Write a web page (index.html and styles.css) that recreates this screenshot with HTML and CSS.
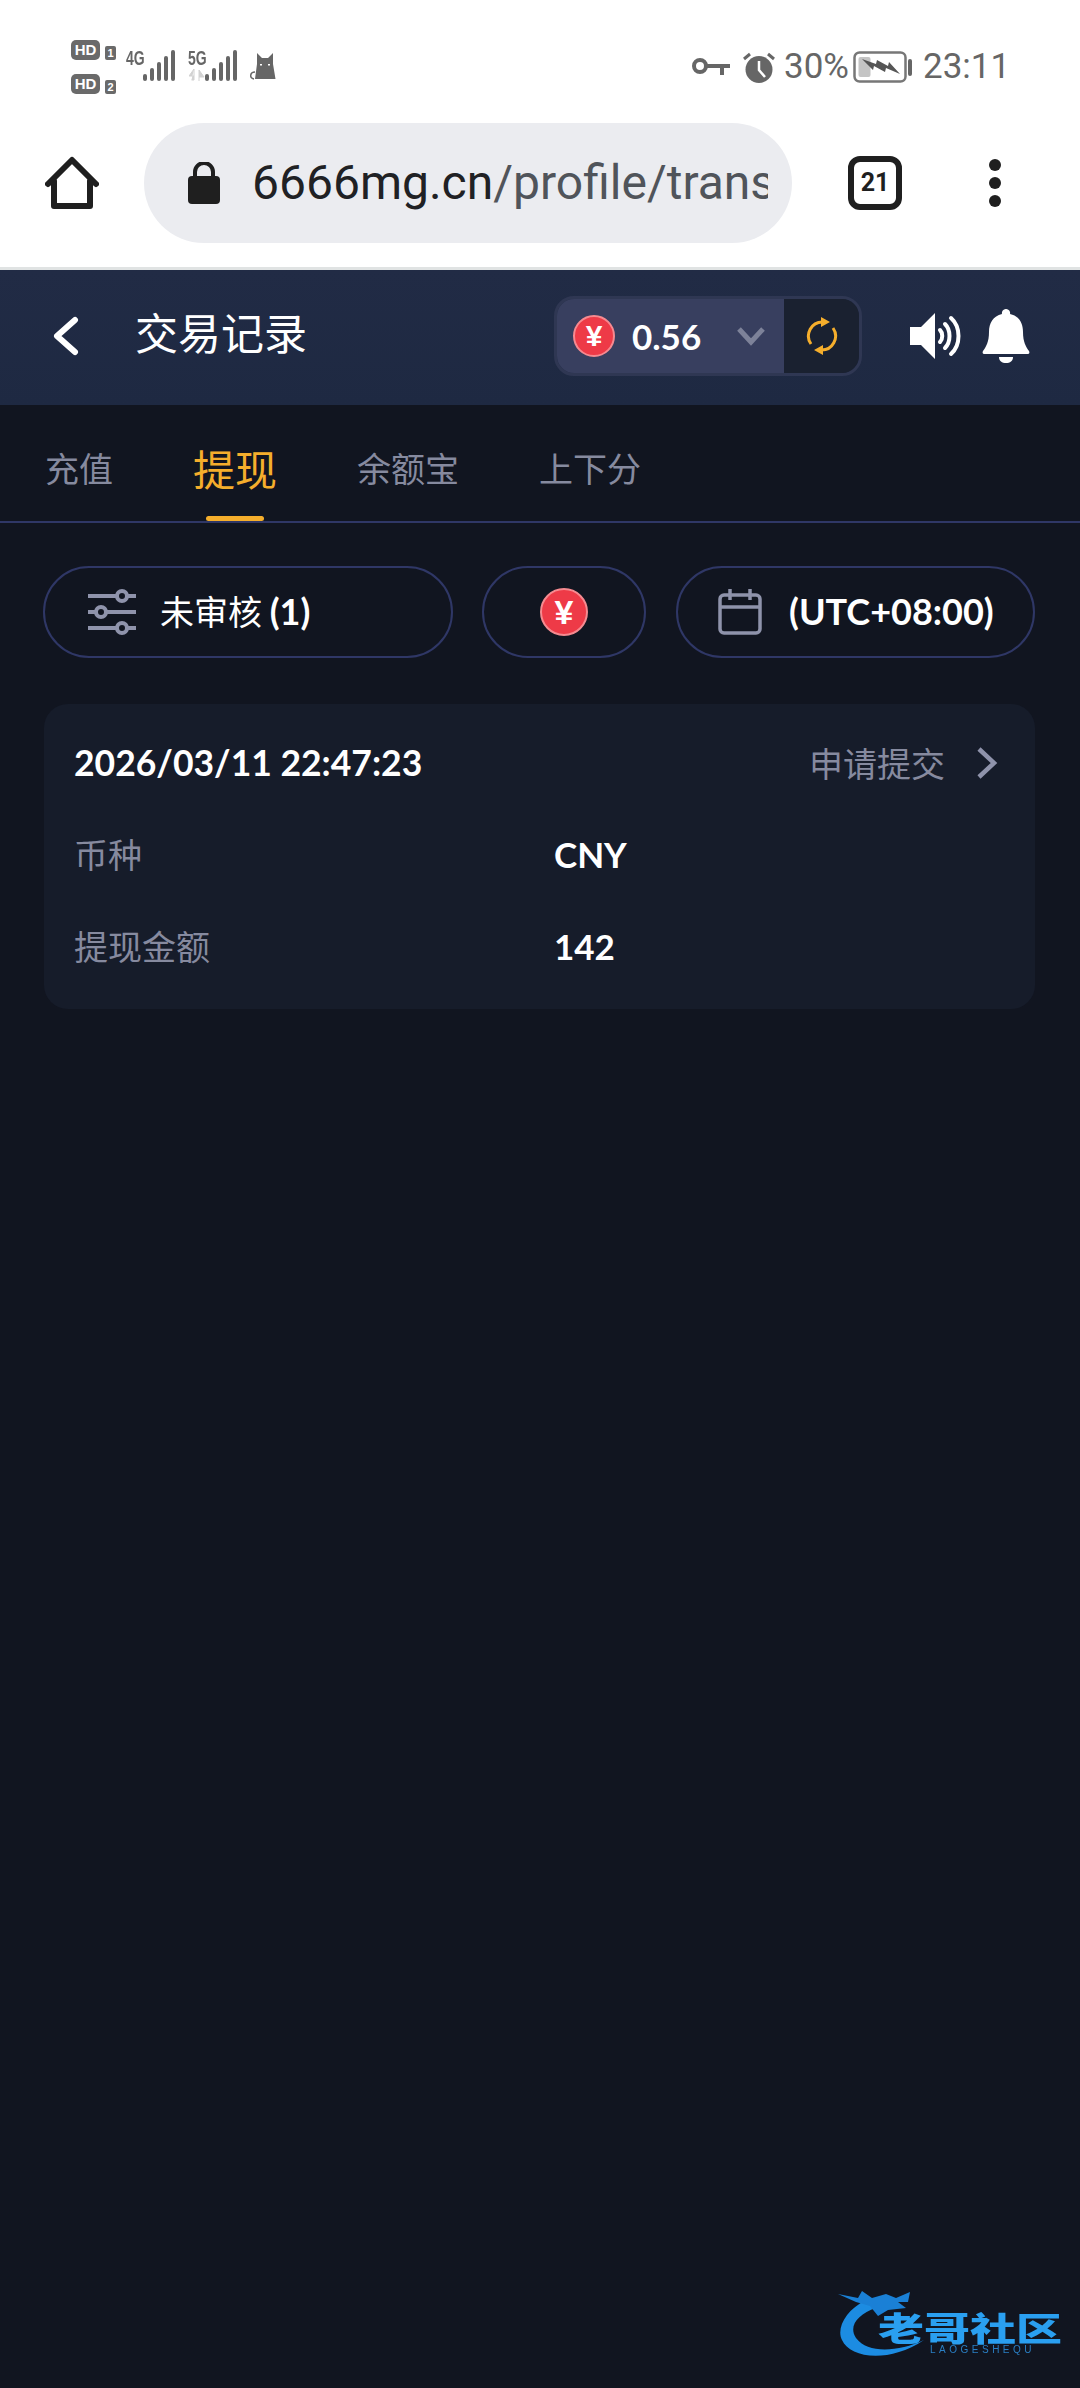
FILE: index.html
```html
<!DOCTYPE html>
<html lang="zh-CN">
<head>
<meta charset="utf-8">
<title>交易记录</title>
<link rel="stylesheet" href="styles.css">
</head>
<body>
<div class="chrome">
  <div class="status">
    <div class="sims">
      <div class="sim"><span class="hd">HD</span><span class="simno">1</span></div>
      <div class="sim"><span class="hd">HD</span><span class="simno">2</span></div>
    </div>
    <div class="net net-a">
      <span class="netlabel">4G</span>
      <svg class="bars" width="35" height="32" viewBox="0 0 35 32"><g fill="#666"><rect x="1" y="24" width="4" height="7" rx="2"/><rect x="8" y="18" width="4" height="13" rx="2"/><rect x="15" y="12" width="4" height="19" rx="2"/><rect x="22" y="6" width="4" height="25" rx="2"/><rect x="29" y="0" width="4" height="31" rx="2"/></g></svg>
    </div>
    <div class="net net-b">
      <span class="netlabel">5G</span>
      <svg class="bars" width="35" height="32" viewBox="0 0 35 32"><g fill="#666"><rect x="1" y="24" width="4" height="7" rx="2"/><rect x="8" y="18" width="4" height="13" rx="2"/><rect x="15" y="12" width="4" height="19" rx="2"/><rect x="22" y="6" width="4" height="25" rx="2"/><rect x="29" y="0" width="4" height="31" rx="2"/></g></svg>
      <svg class="updown" width="16" height="12" viewBox="0 0 16 12"><path d="M5 0v11H2.500M5 0L0 7h5M10 12V1l5 7h-5" fill="#d2d2d2" stroke="#d2d2d2" stroke-width="1"/></svg>
    </div>
    <svg class="cat" width="28" height="28" viewBox="0 0 28 28"><path d="M6 27L8 12V1l5 5h6l5-5v11l2.500 15z" fill="#666"/><rect x="11" y="12" width="2" height="1.500" fill="#fff"/><rect x="19" y="12" width="2" height="1.500" fill="#fff"/><path d="M6 20c-5 0-6 6-1 7" fill="none" stroke="#666" stroke-width="1.500"/></svg>
    <div class="status-right">
      <svg class="key" width="38" height="18" viewBox="0 0 38 18"><circle cx="8" cy="8" r="6" fill="none" stroke="#666" stroke-width="4"/><path d="M14 8h24M30 8v9" stroke="#666" stroke-width="4" fill="none"/></svg>
      <svg class="alarm" width="34" height="31" viewBox="0 0 34 31"><circle cx="17" cy="17.500" r="13.500" fill="#666"/><path d="M17 9v9l6 7" stroke="#fff" stroke-width="2.500" fill="none"/><path d="M2 7l6-5M32 7l-6-5" stroke="#666" stroke-width="3"/></svg>
      <span class="pct">30%</span>
      <svg class="battery" width="60" height="32" viewBox="0 0 60 32"><rect x="1.500" y="1.500" width="51" height="29" rx="5" fill="none" stroke="#777" stroke-width="2.500"/><rect x="5.500" y="6" width="12" height="20" rx="2" fill="#c4c4c4"/><path d="M9 8l14 5 1-4 11 6 1-4 11 12-14-6-1 4-11-6-1 4z" fill="#555"/><rect x="55" y="8" width="4" height="17" rx="2" fill="#666"/></svg>
      <span class="clock">23:11</span>
    </div>
  </div>
  <div class="toolbar">
    <svg class="home" width="54" height="54" viewBox="0 0 54 54"><path d="M3 28L27 4l24 24M9 25v25h36V25" fill="none" stroke="#1f1f1f" stroke-width="6" stroke-linecap="round" stroke-linejoin="round"/></svg>
    <div class="urlbar">
      <svg class="lock" width="32" height="42" viewBox="0 0 32 42"><rect x="0" y="14" width="32" height="28" rx="4" fill="#1f1f1f"/><path d="M7 16V10a9 9 0 0 1 18 0v6" fill="none" stroke="#1f1f1f" stroke-width="4"/></svg>
      <div class="url"><span class="domain">6666mg.cn</span>/profile/trans</div>
    </div>
    <div class="tabcount">21</div>
    <div class="dots"><i></i><i></i><i></i></div>
  </div>
</div>

<header class="appbar">
  <svg class="back" width="28" height="40" viewBox="0 0 28 40"><path d="M24 4L6 20l18 16" fill="none" stroke="#fff" stroke-width="6" stroke-linecap="round" stroke-linejoin="round"/></svg>
  <h1 class="title">交易记录</h1>
  <div class="wallet">
    <div class="wallet-main">
      <span class="yuan yuan-sm">¥</span>
      <span class="amount">0.56</span>
      <svg class="caret" width="30" height="20" viewBox="0 0 30 20"><path d="M3 3l12 13L27 3" fill="none" stroke="#7d8299" stroke-width="5"/></svg>
    </div>
    <div class="wallet-refresh">
      <svg width="32" height="38" viewBox="0 0 32 38"><g fill="none" stroke="#f5ae2c" stroke-width="3"><path d="M5 27A14 14 0 0 1 17 5"/><path d="M27 11a14 14 0 0 1-12 22"/></g><path d="M15 0l9 5-9 5zM17 28v10l-9-5z" fill="#f5ae2c"/></svg>
    </div>
  </div>
  <svg class="speaker" width="52" height="46" viewBox="0 0 52 46"><path d="M0 14h11L25 0v46L11 32H0z" fill="#fff"/><g fill="none" stroke="#fff" stroke-width="4" stroke-linecap="round"><path d="M30 17c3 3 3 9 0 12"/><path d="M35 11c6 6 6 18 0 24"/><path d="M41 5c10 9 10 27 0 36"/></g></svg>
  <svg class="bell" width="48" height="54" viewBox="0 0 48 54"><path d="M24 0a4 4 0 0 1 4 5c9 2 13 9 13 18 0 10 3 15 6 19 1 2 0 3-2 3H3c-2 0-3-1-2-3 3-4 6-9 6-19C7 14 11 7 20 5a4 4 0 0 1 4-5z" fill="#fff"/><path d="M17 48h14c0 4-3 6-7 6s-7-2-7-6z" fill="#fff"/></svg>
</header>

<nav class="tabs">
  <span class="tab">充值</span>
  <span class="tab tab-on">提现</span>
  <span class="tab">余额宝</span>
  <span class="tab">上下分</span>
</nav>

<section class="filters">
  <div class="pill pill-status">
    <svg width="48" height="46" viewBox="0 0 48 46"><g stroke="#8f93ab" stroke-width="4" fill="none"><path d="M0 7h48M0 23h48M0 39h48"/></g><g fill="#111520" stroke="#8f93ab" stroke-width="4"><circle cx="34" cy="7" r="5"/><circle cx="13" cy="23" r="5"/><circle cx="34" cy="39" r="5"/></g></svg>
    <span class="pill-text">未审核 <span class="pill-num">(1)</span></span>
  </div>
  <div class="pill pill-cur"><span class="yuan yuan-lg">¥</span></div>
  <div class="pill pill-date">
    <svg width="44" height="46" viewBox="0 0 44 46"><g fill="none" stroke="#8f93ab" stroke-width="3.500"><rect x="2" y="6" width="40" height="38" rx="4"/><path d="M2 18h40M12 0v11M32 0v11"/></g></svg>
    <span class="pill-text pill-num">(UTC+08:00)</span>
  </div>
</section>

<article class="card">
  <div class="card-head">
    <span class="stamp">2026/03/11 22:47:23</span>
    <span class="state">申请提交</span>
    <svg class="go" width="22" height="34" viewBox="0 0 22 34"><path d="M3 3l15 14L3 31" fill="none" stroke="#8f93ab" stroke-width="4.500"/></svg>
  </div>
  <div class="row"><span class="k">币种</span><span class="v">CNY</span></div>
  <div class="row"><span class="k">提现金额</span><span class="v">142</span></div>
</article>

<div class="mark">
  <svg class="dragon" width="100" height="74" viewBox="0 0 100 74"><path d="M28 10C8 20-2 38 4 50c8 18 46 24 82 0C60 62 30 64 18 48 10 36 20 24 38 18z" fill="#1c8ce2"/><path d="M0 4l20 4 4-7 10 7 14-4 10 4 14-6-2 10H60l8 6-18 2-10 6-8-10-14-4z" fill="#1a80d6"/></svg>
  <div class="mark-text">
    <span class="mark-cn">老哥社区</span>
    <span class="mark-en">LAOGESHEQU</span>
  </div>
</div>
</body>
</html>
```
FILE: styles.css
```css
* { box-sizing: border-box; margin: 0; padding: 0; }
html, body { height: 100%; }
body {
  width: 1080px;
  height: 2388px;
  overflow: hidden;
  position: relative;
  background: #111520;
  font-family: Lato, "Noto Sans CJK SC", sans-serif;
  color: #fff;
}

/* browser chrome */
.chrome { height: 270px; background: #fff; border-bottom: 3px solid #e0e3e3; }
.status { height: 110px; display: flex; align-items: flex-start; padding: 40px 76px 0 71px; color: #666; font-family: Roboto, sans-serif; }
.sims { display: flex; flex-direction: column; gap: 14px; width: 55px; }
.sim { display: flex; align-items: flex-end; gap: 5px; height: 20px; }
.hd { width: 29px; height: 20px; border-radius: 5px; background: #6a6a6a; color: #fff; font: 700 15px/20px "Liberation Sans", sans-serif; text-align: center; }
.simno { width: 11px; height: 14px; border-radius: 2px; background: #6a6a6a; color: #fff; font: 700 11px/14px "Liberation Sans", sans-serif; text-align: center; }
.net { position: relative; width: 62px; height: 40px; margin-top: 10px; }
.netlabel { position: absolute; left: 0; top: 0; font: 700 20px/16px "Liberation Sans", sans-serif; transform: scaleX(.7); transform-origin: left top; color: #666; }
.bars { position: absolute; left: 16px; top: 0; }
.updown { position: absolute; left: 1px; top: 19px; }
.cat { margin: 12px 0 0 -1px; }
.status-right { margin-left: auto; display: flex; align-items: center; height: 42px; margin-top: 6px; }
.key { margin-right: 12px; }
.alarm { margin-right: 8px; }
.pct { font-size: 35px; line-height: 42px; width: 61px; white-space: nowrap; margin-right: 8px; }
.battery { margin-right: 10px; }
.clock { font-size: 35px; line-height: 42px; width: 81px; white-space: nowrap; }

.toolbar { height: 157px; display: flex; align-items: flex-start; padding: 13px 0 0 45px; }
.home { margin: 33px 45px 0 0; }
.urlbar { width: 648px; height: 120px; border-radius: 60px; background: #ebecf0; display: flex; align-items: center; padding: 0 24px 0 44px; }
.lock { flex: none; margin-right: 32px; }
.url { flex: 1; overflow: hidden; white-space: nowrap; font: 400 48px/60px Roboto, sans-serif; color: #50545a; }
.domain { color: #202124; }
.tabcount { width: 54px; height: 54px; margin: 33px 0 0 56px; border: 6px solid #1f1f1f; border-radius: 12px; color: #1f1f1f; font: 700 25px/42px Roboto, sans-serif; text-align: center; }
.dots { display: flex; flex-direction: column; gap: 6px; margin: 36px 0 0 87px; }
.dots i { display: block; width: 12px; height: 12px; border-radius: 50%; background: #1f1f1f; }

/* app header */
.appbar { height: 135px; background: linear-gradient(#212b45, #1e2942); display: flex; align-items: center; padding: 0 0 3px 51px; }
.back { flex: none; }
.title { width: 172px; margin: 0 0 10px 56px; font: 400 43px/50px "Noto Sans CJK SC", sans-serif; white-space: nowrap; }
.wallet { display: flex; width: 308px; height: 80px; margin-left: 247px; border: 3px solid #2f3753; border-radius: 20px; overflow: hidden; }
.wallet-main { width: 227px; display: flex; align-items: center; padding-left: 16px; background: #383f5f; }
.wallet-refresh { flex: 1; display: flex; align-items: center; justify-content: center; background: #1a2130; }
.yuan { display: flex; align-items: center; justify-content: center; flex: none; border-radius: 50%; background: #ee3a47; border: 2px solid #f68a90; color: #fff; font-family: "Liberation Sans", sans-serif; font-weight: 700; }
.yuan-sm { width: 42px; height: 42px; font-size: 30px; }
.yuan-lg { width: 48px; height: 48px; font-size: 34px; }
.amount { margin-left: 17px; font-size: 35px; font-weight: 700; line-height: 44px; width: 104px; }
.speaker { margin-left: 48px; flex: none; }
.bell { margin-left: 20px; flex: none; }

/* tabs */
.tabs { height: 118px; display: flex; align-items: center; gap: 80px; padding: 21px 0 12px 45px; border-bottom: 2px solid #2f3766; }
.tab { position: relative; font: 400 34px/50px "Noto Sans CJK SC", sans-serif; color: #868a9f; white-space: nowrap; }
.tab-on { font-size: 42px; color: #f5ae2c; }
.tab-on::after { content: ""; position: absolute; left: 13px; right: 13px; bottom: -28px; height: 5px; border-radius: 3px; background: #f5ae2c; }

/* filter pills */
.filters { display: flex; gap: 30px; padding: 43px 44px 0 43px; }
.pill { height: 92px; border: 2px solid #2f3766; border-radius: 46px; display: flex; align-items: center; }
.pill-status { width: 410px; padding-left: 43px; gap: 24px; }
.pill-cur { width: 164px; justify-content: center; margin-left: -1px; }
.pill-date { width: 359px; padding-left: 40px; gap: 27px; }
.pill-text { font: 400 34px/44px "Noto Sans CJK SC", sans-serif; white-space: nowrap; margin-bottom: 3px; }
.pill-num { font: 700 36px/44px Lato, sans-serif; white-space: nowrap; }

/* record card */
.card { margin: 46px 45px 0 44px; height: 305px; border-radius: 24px; background: #161c2a; padding: 30px 37px 0 30px; }
.card-head { display: flex; align-items: center; height: 58px; }
.stamp { font-size: 35.500px; font-weight: 700; flex: 1; line-height: 44px; }
.state { font: 400 34px/44px "Noto Sans CJK SC", sans-serif; color: #868a9f; }
.go { margin-left: 31px; flex: none; }
.row { display: flex; align-items: center; height: 58px; margin-top: 34px; padding-bottom: 2px; }
.k { width: 480px; font: 400 34px/44px "Noto Sans CJK SC", sans-serif; color: #868a9f; }
.v { font-size: 35px; font-weight: 700; line-height: 44px; }

/* watermark */
.mark { position: absolute; left: 838px; top: 2290px; width: 230px; height: 74px; filter: blur(.5px); }
.dragon { position: absolute; left: 0; top: 0; }
.mark-text { position: absolute; left: 40px; top: 20px; display: flex; flex-direction: column; align-items: flex-start; }
.mark-cn { display: block; height: 34px; font: 900 46px/34px "Noto Sans CJK SC", sans-serif; color: #2a9ff0; white-space: nowrap; transform: scaleY(.72); }
.mark-en { margin: 1px 0 0 52px; font: 400 10px/10px "Liberation Sans", sans-serif; letter-spacing: 3.500px; color: #2a7fc4; white-space: nowrap; }
```
